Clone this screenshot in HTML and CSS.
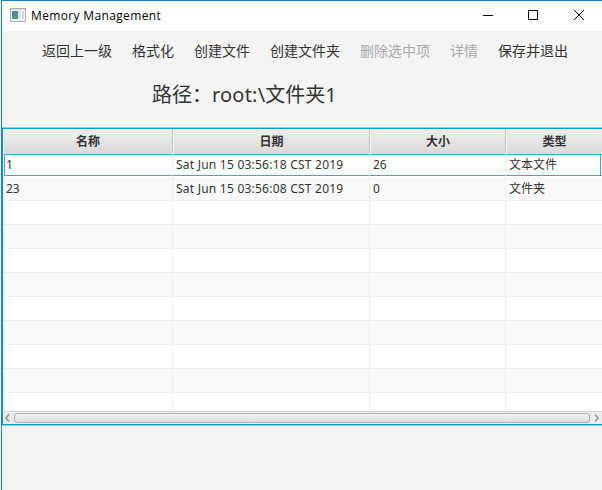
FILE: index.html
```
<!DOCTYPE html>
<html lang="zh-CN">
<head>
<meta charset="utf-8">
<title>Memory Management</title>
<link rel="stylesheet" href="styles.css">
</head>
<body>
<div class="window">
  <header class="titlebar">
    <svg class="app-icon" width="16" height="14" viewBox="0 0 16 14">
      <defs><linearGradient id="pane" x1="0" y1="0" x2="1" y2="1"><stop offset="0" stop-color="#4a74a8"/><stop offset="1" stop-color="#4fa878"/></linearGradient></defs>
      <rect x=".5" y=".5" width="15" height="13" fill="#f4f4f4" stroke="#a9b0b3"/>
      <rect x="1" y="1" width="14" height="1" fill="#d5d9dc"/>
      <rect x="2" y="3" width="6" height="8" fill="url(#pane)"/>
      <rect x="8" y="3" width="3" height="8" fill="#dfe3e6"/>
      <rect x="12" y="3" width="2" height="8" fill="#cddbd8"/>
    </svg>
    <span class="title">Memory Management</span>
    <svg class="controls" width="114" height="12" viewBox="0 0 114 12" fill="none" stroke="#000">
      <path d="M0 6.500h10M45.500 1.500h9v9h-9zM91 1l10 10M101 1L91 11"/>
    </svg>
  </header>
  <nav class="menu">
    <span>返回上一级</span><span>格式化</span><span>创建文件</span><span>创建文件夹</span><span class="disabled">删除选中项</span><span class="disabled">详情</span><span>保存并退出</span>
  </nav>
  <div class="path">路径：<span class="root">root:\</span>文件夹1</div>
  <section class="table">
    <div class="row head"><div>名称</div><div>日期</div><div>大小</div><div>类型</div></div>
    <div class="rows">
      <div class="row selected"><div>1</div><div class="date">Sat Jun 15 03:56:18 CST 2019</div><div>26</div><div>文本文件</div></div>
      <div class="row"><div>23</div><div class="date">Sat Jun 15 03:56:08 CST 2019</div><div>0</div><div>文件夹</div></div>
      <div class="row"><div></div><div></div><div></div><div></div></div>
      <div class="row"><div></div><div></div><div></div><div></div></div>
      <div class="row"><div></div><div></div><div></div><div></div></div>
      <div class="row"><div></div><div></div><div></div><div></div></div>
      <div class="row"><div></div><div></div><div></div><div></div></div>
      <div class="row"><div></div><div></div><div></div><div></div></div>
      <div class="row"><div></div><div></div><div></div><div></div></div>
      <div class="row"><div></div><div></div><div></div><div></div></div>
      <div class="row"><div></div><div></div><div></div><div></div></div>
    </div>
    <div class="scrollbar">
      <svg width="5" height="8" viewBox="0 0 5 8" fill="none" stroke="#949494" stroke-width="1.500"><path d="M4 .5L1 4l3 3.500"/></svg>
      <div class="thumb"></div>
      <svg width="5" height="8" viewBox="0 0 5 8" fill="none" stroke="#949494" stroke-width="1.500"><path d="M1 .5L4 4 1 7.500"/></svg>
    </div>
  </section>
</div>
</body>
</html>
```
FILE: styles.css
```
* { box-sizing: border-box; }
body {
  margin: 0;
  overflow: hidden;
  font-family: "Noto Sans", "Noto Sans CJK SC", sans-serif;
  font-size: 12px;
  color: #333;
  background: #f4f4f4;
}
.window {
  height: 490px;
  margin-left: 1px;
  border-top: 1px solid #1a7fd4;
  border-left: 1px solid #1a7fd4;
  display: flex;
  flex-direction: column;
}
.titlebar {
  height: 30px;
  flex: none;
  background: #fff;
  display: flex;
  align-items: center;
  padding: 0 0 2px 8px;
}
.title {
  margin-left: 5px;
  padding-top: 1px;
  color: #000;
  font-family: "Open Sans", sans-serif;
  letter-spacing: .35px;
  white-space: nowrap;
}
.controls { margin-left: auto; margin-right: 5px; }
.menu {
  height: 40px;
  flex: none;
  display: flex;
  gap: 20px;
  align-items: center;
  padding: 0 0 2px 40px;
  font: 14px/20px "Noto Sans CJK SC", sans-serif;
  white-space: nowrap;
}
.disabled { color: #a9a9a9; }
.path {
  height: 56px;
  flex: none;
  padding-left: 150px;
  font: 20px/48px "Noto Sans", "Noto Sans CJK SC", sans-serif;
  white-space: nowrap;
}
.root { letter-spacing: .2px; }
.table {
  height: 299px;
  flex: none;
  border-top: 1px solid #96d3e8;
  border-bottom: 1px solid #96d3e8;
  position: relative;
  padding: 1px 0 1px 1px;
  background: #039ed3;
}
.row {
  display: grid;
  grid-template-columns: 170px 197px 136px 96px;
  height: 24px;
}
.row > div {
  border-right: 1px solid #ededed;
  border-bottom: 1px solid #ededed;
  padding-left: 3px;
  line-height: 23px;
  white-space: nowrap;
}
.row > div:last-child { border-right: 0; }
.rows { height: 258px; overflow: hidden; background: #fff; }
.rows .row:nth-child(even) { background: #f9f9f9; }
.row.head > div {
  padding: 0 0 0 1px;
  text-align: center;
  font-weight: bold;
  line-height: 25px;
  border-color: #c3c3c3;
  background: linear-gradient(#efefef, #d9d9d9);
  box-shadow: inset 1px 1px #f3f3f3;
}
.rows .selected > div {
  border-bottom-color: #fff;
  background: linear-gradient(#39a9d0, #39a9d0) 0 1px / 100% 1px no-repeat,
    linear-gradient(#39a9d0, #39a9d0) 0 22px / 100% 1px no-repeat;
  background-clip: padding-box;
}
.rows .selected { position: relative; }
.rows .selected::before {
  content: "";
  position: absolute;
  inset: 1px 1px 1px 1px;
  border: solid #39a9d0;
  border-width: 0 1px;
}
.rows .selected > div:first-child { background-position: 1px 1px, 1px 22px; }
.date { letter-spacing: .23px; }
.scrollbar {
  height: 13px;
  display: flex;
  align-items: center;
  gap: 4px;
  padding: 0 3px 0 2px;
  border-top: 1px solid #d5d5d5;
  background: #ececec;
}
.thumb {
  flex: 1;
  height: 10px;
  border: 1px solid #b2b2b2;
  border-radius: 3px;
  background: linear-gradient(#f2f2f2, #dcdcdc);
}
```
